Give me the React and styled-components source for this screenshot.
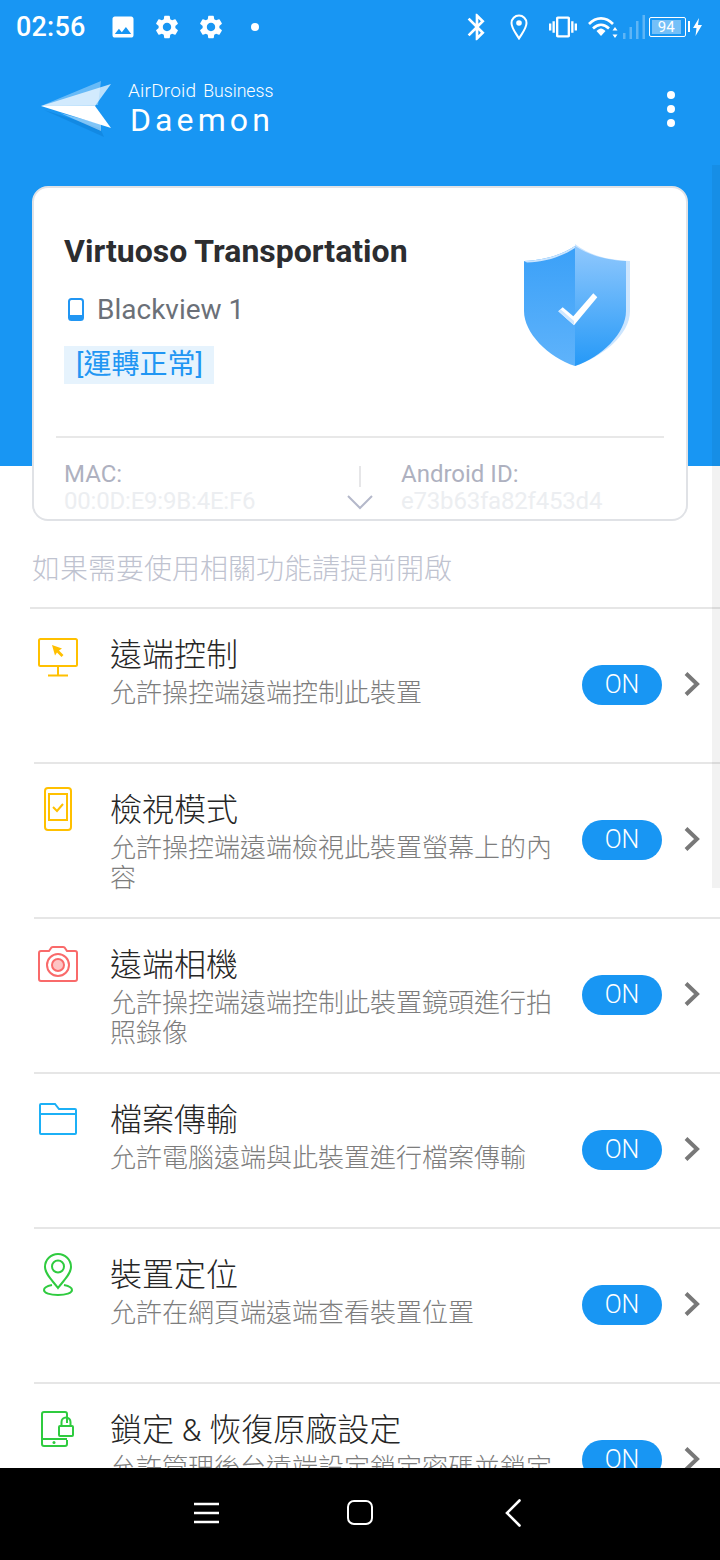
import styled, { createGlobalStyle } from "styled-components"
import { MdPhoto, MdSettings, MdBluetooth, MdVibration } from "react-icons/md"

const GlobalStyle = createGlobalStyle`
    html, body {
        margin: 0;
        padding: 0;
        background: #fff;
    }
    * {
        box-sizing: border-box;
    }
`

const features = [
    { title: "遠端控制", desc: "允許操控端遠端控制此裝置", Icon: MonitorIcon },
    { title: "檢視模式", desc: "允許操控端遠端檢視此裝置螢幕上的內容", Icon: ViewIcon },
    { title: "遠端相機", desc: "允許操控端遠端控制此裝置鏡頭進行拍照錄像", Icon: CameraIcon },
    { title: "檔案傳輸", desc: "允許電腦遠端與此裝置進行檔案傳輸", Icon: FolderIcon },
    { title: "裝置定位", desc: "允許在網頁端遠端查看裝置位置", Icon: PinIcon },
    { title: "鎖定 & 恢復原廠設定", desc: "允許管理後台遠端設定鎖定密碼並鎖定裝置或恢復原廠設定", Icon: LockIcon },
]

function MonitorIcon() {
    return (
        <svg width="40" height="46" viewBox="0 -7 40 46" fill="none">
            <rect x="1" y="1" width="38" height="27" rx="1.5" stroke="#ffc000" strokeWidth="2" />
            <path d="M20 28v9M10 37.500h20" stroke="#ffc000" strokeWidth="2" />
            <path d="M14 7l10 3.500-3 2 4.500 4.500-2 2-4.500-4.500-2 3z" fill="#ffc000" />
        </svg>
    )
}

function ViewIcon() {
    return (
        <svg width="28" height="44" viewBox="0 0 28 44" fill="none">
            <rect x="1" y="1" width="26" height="42" rx="3" stroke="#ffc000" strokeWidth="2" />
            <rect x="5" y="7" width="18" height="26" stroke="#ffc000" strokeWidth="2" />
            <path d="M9 20l4 4 6-7" stroke="#ffc000" strokeWidth="2" />
        </svg>
    )
}

function CameraIcon() {
    return (
        <svg width="40" height="36" viewBox="0 0 40 36" fill="none">
            <path d="M3 5h8l2.500-3.500c.5-.5 1-.5 1.500-.5h10c.5 0 1 0 1.500.5L29 5h8c1 0 2 1 2 2v26c0 1-1 2-2 2H3c-1 0-2-1-2-2V7c0-1 1-2 2-2z" stroke="#f96a6a" strokeWidth="2" />
            <circle cx="20" cy="19" r="11" stroke="#f96a6a" strokeWidth="2" />
            <circle cx="20" cy="19" r="6" fill="#fdc4c4" stroke="#f96a6a" strokeWidth="2" />
        </svg>
    )
}

function FolderIcon() {
    return (
        <svg width="38" height="32" viewBox="0 0 38 32" fill="none">
            <path d="M1 2c0-.6.4-1 1-1h14l4 5h16c.6 0 1 .4 1 1v23c0 .6-.4 1-1 1H2c-.6 0-1-.4-1-1z" stroke="#1cb0f6" strokeWidth="2" />
            <path d="M1 11h36" stroke="#1cb0f6" strokeWidth="2" />
        </svg>
    )
}

function PinIcon() {
    return (
        <svg width="30" height="44" viewBox="0 0 30 44" fill="none">
            <path d="M15 36C9 28 2 22 2 15a13 13 0 0 1 26 0c0 7-7 13-13 21z" stroke="#2fcb3f" strokeWidth="2" />
            <circle cx="15" cy="14.500" r="6" stroke="#2fcb3f" strokeWidth="2" />
            <path d="M9 33C4 34 1 36 1 38c0 3 6 5 14 5s14-2 14-5c0-2-3-4-8-5" stroke="#2fcb3f" strokeWidth="2" />
        </svg>
    )
}

function LockIcon() {
    return (
        <svg width="34" height="36" viewBox="0 0 34 36" fill="none">
            <path d="M26 12V3c0-1-1-2-2-2H3C2 1 1 2 1 3v30c0 1 1 2 2 2h21c1 0 2-1 2-2v-4" stroke="#2fcb3f" strokeWidth="2" />
            <path d="M1 28h25" stroke="#2fcb3f" strokeWidth="2" />
            <circle cx="13" cy="31.500" r="1.500" fill="#2fcb3f" />
            <rect x="18" y="15" width="14" height="10" rx="1" stroke="#2fcb3f" strokeWidth="2" />
            <path d="M20.500 15v-4a4.500 4.500 0 0 1 9 0v4" stroke="#2fcb3f" strokeWidth="2" />
        </svg>
    )
}

const PlaneLogo = () => (
    <svg width="74" height="62" viewBox="0 0 74 62">
        <path d="M4 30L64 57l-4-9z" fill="#0f7fd6" opacity=".55" />
        <path d="M1 26L61 1l-3 24z" fill="#fff" opacity=".35" />
        <path d="M1 26L71 4 55 26z" fill="#fff" opacity=".7" />
        <path d="M20 33l41 18v-7z" fill="#fff" opacity=".45" />
        <path d="M1 26h54l16 22z" fill="#fff" />
    </svg>
)

const ShieldIcon = () => (
    <svg width="108" height="124" viewBox="0 0 108 124">
        <defs>
            <linearGradient id="shieldLeft" x1="0" y1="0" x2="0" y2="1">
                <stop offset="0" stopColor="#3aa0f8" />
                <stop offset="1" stopColor="#5fb3fb" />
            </linearGradient>
            <linearGradient id="shieldRight" x1="0" y1="0" x2="0" y2="1">
                <stop offset="0" stopColor="#90c8fd" />
                <stop offset="1" stopColor="#2599f7" />
            </linearGradient>
        </defs>
        <path d="M52 1c14 11 32 16 55 17v50c0 24-28 46-55 55z" fill="#cce5fe" />
        <path d="M52 3C66 12 82 17 103 18v50c0 22-24 46-51 55z" fill="url(#shieldRight)" />
        <path d="M52 3C38 12 22 17 1 18v50c0 22 24 46 51 55z" fill="url(#shieldLeft)" />
        <path d="M1 18c21-1 37-6 51-15v2C38 14 22 19 4 19.500z" fill="#cce5fe" />
        <path d="M35.300 68.300l4.400-4 10.600 9 20-23 4 4L51 82.300z" fill="#fff" />
        <path d="M35.300 68.300l2.200-2L51 78v4.300z" fill="#cfe7ff" />
    </svg>
)

const LocationIcon = () => (
    <svg width="18" height="26" viewBox="0 0 18 26" fill="none">
        <path d="M9 24.500C5 18 1.500 14 1.500 9a7.500 7.500 0 0 1 15 0c0 5-3.500 9-7.500 15.500z" stroke="#fff" strokeWidth="2" />
        <circle cx="9" cy="9" r="2.800" fill="#fff" />
    </svg>
)

const WifiIcon = () => (
    <svg width="30" height="22" viewBox="0 0 30 22" fill="none">
        <path d="M1 8c7-7.500 17-7.500 24 0" stroke="#fff" strokeWidth="2.600" />
        <path d="M5 12.500c5-5 11-5 16 0" stroke="#fff" strokeWidth="2.600" />
        <path d="M8.500 15c3.500-3.500 5.500-3.500 9 0L13 20z" fill="#fff" />
        <path d="M27 11l2.500 3.500h-5zM27 22l2.500-3.500h-5z" fill="#fff" />
    </svg>
)

const SignalIcon = () => (
    <svg width="22" height="24" viewBox="0 0 22 24" fill="#fff" opacity=".3">
        <rect x="0" y="18" width="2.500" height="6" />
        <rect x="6.500" y="12" width="2.500" height="12" />
        <rect x="13" y="6" width="2.500" height="18" />
        <rect x="19.500" y="0" width="2.500" height="24" />
    </svg>
)

const BoltIcon = () => (
    <svg width="9" height="18" viewBox="0 0 9 18" fill="#fff">
        <path d="M6 0L0 10h3.500L2.500 18 9 7H5z" />
    </svg>
)

const MenuIcon = () => (
    <svg width="25" height="22" viewBox="0 0 25 22" stroke="#fff" strokeWidth="2.600">
        <path d="M0 2h25M0 11h25M0 20h25" />
    </svg>
)

const BackIcon = () => (
    <svg width="16" height="28" viewBox="0 0 16 28" fill="none" stroke="#fff" strokeWidth="2.600" strokeLinecap="round">
        <path d="M14.500 1.500L2 14l12.500 12.500" />
    </svg>
)

const Chevron = () => (
    <svg width="16" height="24" viewBox="0 0 16 24" fill="none" stroke="#787878" strokeWidth="4">
        <path d="M2 1.500L13 12 2 22.500" />
    </svg>
)

const CardChevron = () => (
    <svg width="26" height="15" viewBox="0 0 26 15" fill="none" stroke="#b4b8ca" strokeWidth="2">
        <path d="M1 1l12 12L25 1" />
    </svg>
)

const Phone = () => (
    <svg width="16" height="23" viewBox="0 0 16 23" fill="none">
        <rect x="1" y="1" width="14" height="21" rx="2.500" stroke="#2196f3" strokeWidth="2" />
        <path d="M1 17h14v3a2 2 0 0 1-2 2H3a2 2 0 0 1-2-2z" fill="#2196f3" />
    </svg>
)

const App = () => {
    return (
        <Screen>
            <GlobalStyle />
            <Content>
                <Top>
                    <StatusBar>
                        <StatusLeft>
                            <Clock>02:56</Clock>
                            <StatusIcons>
                                <MdPhoto size={28} color="#fff" />
                                <MdSettings size={28} color="#fff" />
                                <MdSettings size={28} color="#fff" />
                                <Dot />
                            </StatusIcons>
                        </StatusLeft>
                        <StatusRight>
                            <MdBluetooth size={32} color="#fff" />
                            <LocationSlot><LocationIcon /></LocationSlot>
                            <VibrationSlot><MdVibration size={28} color="#fff" /></VibrationSlot>
                            <WifiIcon />
                            <SignalIcon />
                            <Battery><BatteryFill>94</BatteryFill></Battery>
                            <BoltIcon />
                        </StatusRight>
                    </StatusBar>
                    <AppBar>
                        <Brand>
                            <PlaneLogo />
                            <BrandText>
                                <BrandTop>AirDroid <small>Business</small></BrandTop>
                                <BrandName>Daemon</BrandName>
                            </BrandText>
                        </Brand>
                        <Dots><span /><span /><span /></Dots>
                    </AppBar>
                    <Card>
                        <CardHead>
                            <div>
                                <DeviceOwner>Virtuoso Transportation</DeviceOwner>
                                <DeviceRow><Phone />Blackview 1</DeviceRow>
                                <StatusTag>[運轉正常]</StatusTag>
                            </div>
                            <ShieldIcon />
                        </CardHead>
                        <CardRule />
                        <Ids>
                            <IdCol>
                                <IdLabel>MAC:</IdLabel>
                                <IdValue>00:0D:E9:9B:4E:F6</IdValue>
                            </IdCol>
                            <IdCol>
                                <IdLabel>Android ID:</IdLabel>
                                <IdValue>e73b63fa82f453d4</IdValue>
                            </IdCol>
                        </Ids>
                        <IdSeparator />
                        <ExpandMark><CardChevron /></ExpandMark>
                    </Card>
                </Top>
                <Hint>如果需要使用相關功能請提前開啟</Hint>
                <List>
                    {features.map(({ title, desc, Icon }, i) => (
                        <Row key={title} $first={i === 0}>
                            <IconCell><Icon /></IconCell>
                            <RowText>
                                <RowTitle>{title}</RowTitle>
                                <RowDesc>{desc}</RowDesc>
                            </RowText>
                            <Pill>ON</Pill>
                            <ChevronCell><Chevron /></ChevronCell>
                        </Row>
                    ))}
                </List>
                <ScrollThumb />
            </Content>
            <NavBar>
                <MenuIcon />
                <HomeKey />
                <BackIcon />
            </NavBar>
        </Screen>
    )
}

const cjk = `Roboto, "Noto Sans CJK TC", sans-serif`

const Screen = styled.div`
    width: 720px;
    height: 1560px;
    display: flex;
    flex-direction: column;
    overflow: hidden;
    font-family: ${cjk};
    background: #fff;
`
const Content = styled.div`
    position: relative;
    height: 1468px;
    overflow: hidden;
`
const Top = styled.div`
    height: 521px;
    padding-top: 1px;
    background: linear-gradient(#1896f3 466px, #fff 466px);
`
const StatusBar = styled.div`
    height: 52px;
    padding: 0 18px 0 16px;
    display: flex;
    justify-content: space-between;
    align-items: center;
    color: #fff;
`
const StatusLeft = styled.div`
    display: flex;
    align-items: center;
    gap: 23px;
`
const Clock = styled.div`
    font-size: 27px;
    font-weight: 500;
    letter-spacing: .2px;
`
const StatusIcons = styled.div`
    display: flex;
    align-items: center;
    gap: 16px;
`
const Dot = styled.span`
    width: 8px;
    height: 8px;
    margin-left: 10px;
    border-radius: 50%;
    background: #fff;
`
const StatusRight = styled.div`
    display: flex;
    align-items: center;
    gap: 5px;
`
const LocationSlot = styled.span`
    display: flex;
    margin: 0 16px 0 12px;
`
const VibrationSlot = styled.span`
    display: flex;
    margin-right: 6px;
`
const Battery = styled.div`
    position: relative;
    width: 37px;
    height: 20px;
    padding: 2px;
    border: 1.500px solid #fff;
    border-radius: 2px;
    margin: 0 2px 0 -1px;
    &::after {
        content: "";
        position: absolute;
        right: -5px;
        top: 3px;
        width: 2px;
        height: 11px;
        background: #fff;
    }
`
const BatteryFill = styled.div`
    height: 100%;
    width: 92%;
    background: rgba(255, 255, 255, .4);
    color: #fff;
    font-size: 15px;
    line-height: 14px;
    text-align: center;
`
const AppBar = styled.div`
    height: 133px;
    padding: 27px 40px 0 40px;
    display: flex;
    justify-content: space-between;
    align-items: flex-start;
`
const Brand = styled.div`
    display: flex;
    align-items: flex-start;
    gap: 14px;
`
const BrandText = styled.div`
    color: #fff;
    margin-top: -1px;
`
const BrandTop = styled.div`
    font-size: 19px;
    line-height: 24px;
    font-weight: 300;
    letter-spacing: .2px;
    small {
        margin-left: 2px;
        font-size: 17.700px;
        font-weight: 300;
        letter-spacing: 0;
    }
`
const BrandName = styled.div`
    font-size: 32px;
    line-height: 34px;
    font-weight: 400;
    letter-spacing: 4.100px;
    margin-left: 2px;
`
const Dots = styled.div`
    display: flex;
    flex-direction: column;
    gap: 6px;
    margin: 11px 5px 0 0;
    span {
        width: 8px;
        height: 8px;
        border-radius: 50%;
        background: #fff;
    }
`
const Card = styled.div`
    position: relative;
    height: 335px;
    margin: 0 32px;
    border: 2px solid #e0e2e6;
    border-radius: 16px;
    background: #fff;
    overflow: hidden;
`
const CardHead = styled.div`
    height: 248px;
    padding: 44px 55px 0 30px;
    display: flex;
    justify-content: space-between;
    align-items: flex-start;
    > svg {
        margin-top: 11px;
    }
`
const DeviceOwner = styled.div`
    font-size: 32px;
    line-height: 38px;
    font-weight: 700;
    color: #2c2d30;
`
const DeviceRow = styled.div`
    margin-top: 21px;
    display: flex;
    align-items: center;
    gap: 13px;
    font-size: 28px;
    line-height: 38px;
    color: #6b7078;
    svg {
        margin: -2px 0 0 4px;
    }
`
const StatusTag = styled.div`
    width: 150px;
    height: 38px;
    margin-top: 17px;
    padding-left: 12px;
    background: #e6f3fd;
    color: #2196f3;
    font-size: 28px;
    line-height: 38px;
    white-space: nowrap;
`
const CardRule = styled.div`
    height: 2px;
    margin: 0 22px;
    background: #e8e8e8;
`
const Ids = styled.div`
    display: grid;
    grid-template-columns: 337px 1fr;
    padding: 23px 0 0 30px;
`
const IdCol = styled.div`
    display: flex;
    flex-direction: column;
`
const IdLabel = styled.div`
    font-size: 24px;
    line-height: 27px;
    color: #aeb1c0;
`
const IdValue = styled.div`
    font-size: 24px;
    line-height: 26px;
    letter-spacing: -.2px;
    color: #eceef1;
`
const IdSeparator = styled.div`
    position: absolute;
    left: 325px;
    top: 278px;
    width: 1.500px;
    height: 21px;
    background: #e6e6e8;
`
const ExpandMark = styled.div`
    position: absolute;
    left: 313px;
    top: 307px;
    display: flex;
`
const Hint = styled.div`
    height: 86px;
    padding: 29px 0 0 32px;
    font-size: 28px;
    line-height: 40px;
    font-weight: 300;
    color: #bfc3d0;
`
const List = styled.div`
    display: flex;
    flex-direction: column;
`
const Row = styled.div`
    flex: none;
    height: 155px;
    display: grid;
    grid-template-columns: 76px 442px 110px 1fr;
    margin-left: ${(p) => (p.$first ? "30px" : "34px")};
    padding-left: ${(p) => (p.$first ? "4px" : "0")};
    border-top: 2px solid #e6e6e6;
`
const IconCell = styled.div`
    align-self: start;
    height: 67px;
    padding: 23px 28px 0 0;
    display: flex;
    justify-content: center;
    align-items: center;
`
const RowText = styled.div`
    display: flex;
    flex-direction: column;
    padding-top: 23px;
`
const RowTitle = styled.div`
    font-size: 32px;
    line-height: 46px;
    font-weight: 300;
    color: #262626;
`
const RowDesc = styled.div`
    font-size: 26px;
    line-height: 30px;
    font-weight: 300;
    color: #7d7d7d;
`
const Pill = styled.div`
    justify-self: end;
    width: 80px;
    height: 40px;
    margin-top: 56px;
    border-radius: 20px;
    background: #1896f3;
    color: #fff;
    font-size: 25px;
    font-weight: 300;
    line-height: 40px;
    text-align: center;
`
const ChevronCell = styled.div`
    display: flex;
    padding: 63px 0 0 22px;
`
const ScrollThumb = styled.div`
    position: absolute;
    right: 0;
    top: 165px;
    width: 8px;
    height: 723px;
    background: rgba(0, 0, 0, .05);
`
const NavBar = styled.div`
    flex: none;
    height: 92px;
    padding: 0 5px 3px 0;
    background: #000;
    display: flex;
    justify-content: center;
    align-items: center;
    gap: 130px;
`
const HomeKey = styled.div`
    width: 26px;
    height: 25px;
    margin: 0 2px 0 -2px;
    border: 2.600px solid #fff;
    border-radius: 7px;
`

export default App
